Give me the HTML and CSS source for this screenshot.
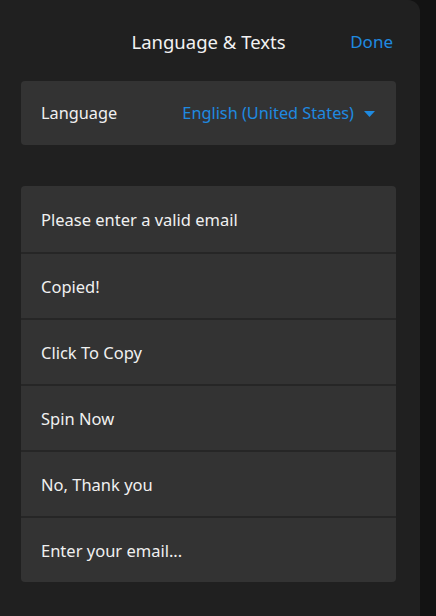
FILE: index.html
```html
<!DOCTYPE html>
<html lang="en">
<head>
    <meta charset="UTF-8">
    <meta name="viewport" content="width=device-width, initial-scale=1.0">
    <title>Language &amp; Texts</title>
    <link rel="stylesheet" href="styles.css">
</head>
<body>
    <div class="panel">
        <div class="header">
            <h1>Language &amp; Texts</h1>
            <a class="done" href="#">Done</a>
        </div>

        <div class="card lang-row">
            <span class="label">Language</span>
            <div class="select">
                <span>English (United States)</span>
                <svg class="caret" width="11" height="6" viewBox="0 0 11 6">
                    <path d="M0 0 H11 L5.5 6 Z" fill="#1f8ae0"/>
                </svg>
            </div>
        </div>

        <div class="card texts">
            <div class="text-row">Please enter a valid email</div>
            <div class="text-row">Copied!</div>
            <div class="text-row">Click To Copy</div>
            <div class="text-row">Spin Now</div>
            <div class="text-row">No, Thank you</div>
            <div class="text-row">Enter your email...</div>
        </div>
    </div>
</body>
</html>
```

FILE: styles.css
```css
body {
    margin: 0;
    background: #131313;
    font-family: 'Noto Sans', 'Open Sans', sans-serif;
    color: #f0f0f0;
}

.panel {
    width: 420px;
    height: 616px;
    background: #202020;
    border-top-right-radius: 12px;
    box-sizing: border-box;
    padding: 0 24px 0 21px;
}

.header {
    position: relative;
    height: 81px;
    display: flex;
    align-items: center;
    justify-content: center;
    padding-top: 2px;
    box-sizing: border-box;
}

.header h1 {
    margin: 0;
    font-size: 18.5px;
    font-weight: normal;
    color: #f2f2f2;
}

.done {
    position: absolute;
    right: 3px;
    color: #1f8ae0;
    text-decoration: none;
    font-size: 17px;
}

.card {
    background: #333333;
    border-radius: 4px;
}

.lang-row {
    height: 64px;
    display: flex;
    align-items: center;
    justify-content: space-between;
    padding: 0 21px 0 20px;
    font-size: 16.3px;
}

.select {
    display: flex;
    align-items: center;
    gap: 10px;
    color: #1f8ae0;
}

.caret {
    margin-top: 1px;
}

.texts {
    margin-top: 41px;
}

.text-row {
    height: 66px;
    box-sizing: border-box;
    display: flex;
    align-items: center;
    padding: 0 20px;
    font-size: 16.5px;
}

.text-row + .text-row {
    border-top: 2px solid #262626;
}
```
